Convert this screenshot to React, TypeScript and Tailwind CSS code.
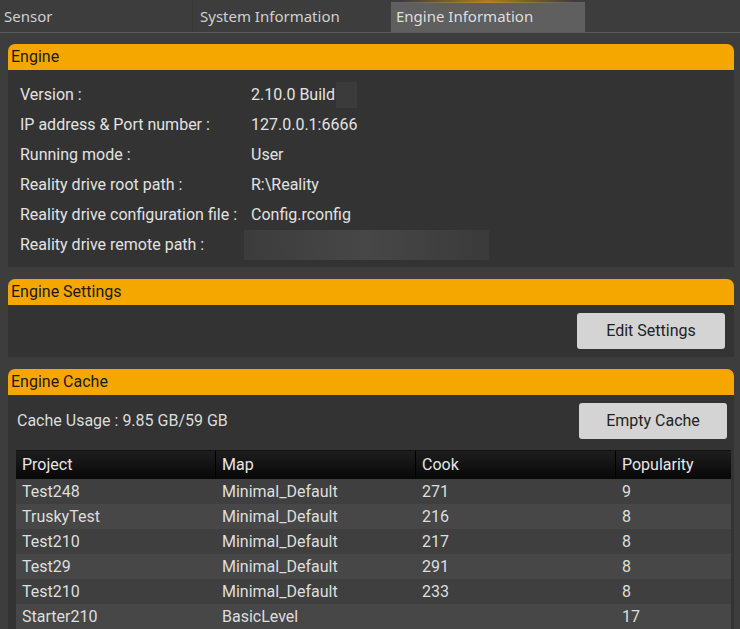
import React from 'react';

const infoRows = [
    { label: 'Version :', value: '2.10.0 Build', redact: 'small' },
    { label: 'IP address & Port number :', value: '127.0.0.1:6666' },
    { label: 'Running mode :', value: 'User' },
    { label: 'Reality drive root path :', value: 'R:\\Reality' },
    { label: 'Reality drive configuration file :', value: 'Config.rconfig' },
    { label: 'Reality drive remote path :', value: '', redact: 'wide' },
];

const cacheRows = [
    ['Test248', 'Minimal_Default', '271', '9'],
    ['TruskyTest', 'Minimal_Default', '216', '8'],
    ['Test210', 'Minimal_Default', '217', '8'],
    ['Test29', 'Minimal_Default', '291', '8'],
    ['Test210', 'Minimal_Default', '233', '8'],
    ['Starter210', 'BasicLevel', '', '17'],
];

function SectionHeader({ title }: { title: string }) {
    return (
        <div className="h-[26px] bg-[#f5a700] rounded-t-[7px] flex items-center px-[3px] text-[16px] text-[#1a1a1a]">
            {title}
        </div>
    );
}

export default function App() {
    return (
        <div className="w-[740px] h-[629px] overflow-hidden bg-[#3d3d3d] text-[#e2e2e2] font-['Roboto',sans-serif]">
            {/* tabs */}
            <div className="h-[33px] flex border-b border-[#5a5a5a] font-['Noto_Sans',sans-serif] text-[15px] text-[#d0d0d0]">
                <div className="w-[193px] pl-[4px] pt-[5px] border-r border-[#383838]">Sensor</div>
                <div className="w-[198px] pl-[7px] pt-[5px]">System Information</div>
                <div className="relative w-[194px] mt-[2px] bg-[#5f5f5f] pl-[5px] pt-[3px] text-[#dedede]">
                    <div className="absolute -top-[2px] left-[10px] right-[10px] h-[3px] bg-gradient-to-r from-transparent via-[#f5a700] to-transparent opacity-60" />
                    Engine Information
                </div>
            </div>

            <div className="px-[8px] pt-[11px] pr-[6px]">
                {/* Engine */}
                <SectionHeader title="Engine" />
                <div className="bg-[#333333] pt-[10px] pb-[7px] text-[16px]">
                    {infoRows.map((r) => (
                        <div key={r.label} className="h-[30px] flex items-center">
                            <div className="w-[243px] pl-[12px]">{r.label}</div>
                            {r.redact === 'wide' ? (
                                <div className="-ml-[7px] w-[245px] h-[30px] bg-gradient-to-r from-[#3c3c3c] via-[#474747] to-[#3a3a3a]" />
                            ) : (
                                <div className="flex items-center">
                                    <span>{r.value}</span>
                                    {r.redact === 'small' && <span className="ml-[1px] w-[21px] h-[26px] bg-[#3b3b3b]" />}
                                </div>
                            )}
                        </div>
                    ))}
                </div>

                {/* Engine Settings */}
                <div className="mt-[12px]">
                    <SectionHeader title="Engine Settings" />
                    <div className="bg-[#333333] h-[52px] flex items-start justify-end pt-[8px] pr-[9px]">
                        <button className="w-[148px] h-[36px] bg-[#d4d4d4] rounded-[3px] text-[16px] text-[#222] font-['Roboto',sans-serif]">
                            Edit Settings
                        </button>
                    </div>
                </div>

                {/* Engine Cache */}
                <div className="mt-[12px]">
                    <SectionHeader title="Engine Cache" />
                    <div className="bg-[#333333] pl-[8px] pr-[3px] pb-[10px]">
                        <div className="h-[55px] flex items-start justify-between pt-[8px] pr-[4px]">
                            <div className="pt-[6px] pl-[1px] text-[16px] text-[#dcdcdc]">Cache Usage : 9.85 GB/59 GB</div>
                            <button className="w-[148px] h-[36px] bg-[#d4d4d4] rounded-[3px] text-[16px] text-[#222] font-['Roboto',sans-serif]">
                                Empty Cache
                            </button>
                        </div>
                        <div className="text-[16px]">
                            <div className="h-[29px] grid grid-cols-[200px_200px_200px_115px] bg-gradient-to-b from-[#1e1e1e] to-[#080808] border-t border-[#111]">
                                {['Project', 'Map', 'Cook', 'Popularity'].map((h, i) => (
                                    <div
                                        key={h}
                                        className={`flex items-center pl-[6px] text-[#e6e6e6] ${i < 3 ? 'border-r border-[#000]' : ''}`}
                                    >
                                        {h}
                                    </div>
                                ))}
                            </div>
                            {cacheRows.map((row, i) => (
                                <div
                                    key={i}
                                    className={`h-[25px] grid grid-cols-[200px_200px_200px_115px] ${i % 2 === 0 ? 'bg-[#3f3f3f]' : 'bg-[#474747]'}`}
                                >
                                    {row.map((c, j) => (
                                        <div key={j} className="flex items-center pl-[6px] text-[#dedede]">
                                            {c}
                                        </div>
                                    ))}
                                </div>
                            ))}
                        </div>
                    </div>
                </div>
            </div>
        </div>
    );
}
